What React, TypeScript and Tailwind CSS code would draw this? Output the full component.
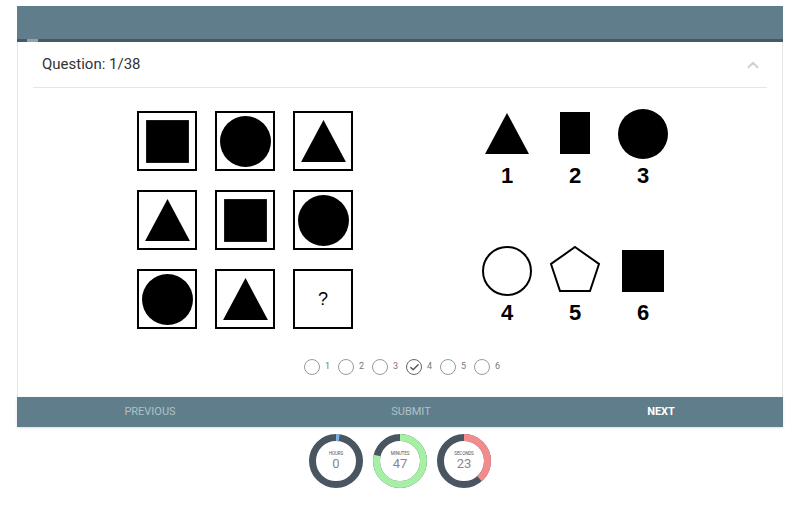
import React from 'react'
import { ChevronUp, Check } from 'lucide-react'

type Shape = 'square' | 'circle' | 'triangle' | 'rect' | 'ring' | 'pentagon' | 'none'

const ShapeIcon = ({ shape, size }: { shape: Shape; size: number }) => {
  return (
    <svg width={size} height={size} viewBox="0 0 52 52">
      {shape === 'square' && <rect x="5" y="5" width="42" height="42" fill="#000" />}
      {shape === 'rect' && <rect x="11" y="4" width="30" height="42" fill="#000" />}
      {shape === 'circle' && <circle cx="26" cy="26" r="25" fill="#000" />}
      {shape === 'ring' && <circle cx="26" cy="26" r="24" fill="none" stroke="#000" strokeWidth="2" />}
      {shape === 'triangle' && <polygon points="26,5 48,46 4,46" fill="#000" />}
      {shape === 'pentagon' && <polygon points="26,2 50,19 41,46 11,46 2,19" fill="none" stroke="#000" strokeWidth="2" />}
    </svg>
  )
}

const matrix: Shape[] = ['square', 'circle', 'triangle', 'triangle', 'square', 'circle', 'circle', 'triangle', 'none']

const answers: { shape: Shape; n: number }[][] = [
  [
    { shape: 'triangle', n: 1 },
    { shape: 'rect', n: 2 },
    { shape: 'circle', n: 3 },
  ],
  [
    { shape: 'ring', n: 4 },
    { shape: 'pentagon', n: 5 },
    { shape: 'square', n: 6 },
  ],
]

const Ring = ({ label, value, color, base, from, to }: { label: string; value: number; color: string; base: string; from: number; to: number }) => {
  const r = 23.5
  const c = 2 * Math.PI * r
  const len = ((to - from) / 360) * c
  return (
    <div className="relative w-[54px] h-[54px]">
      <svg width="54" height="54" viewBox="0 0 54 54" className="absolute inset-0">
        <circle cx="27" cy="27" r={r} fill="none" stroke={base} strokeWidth="7" />
        <circle
          cx="27"
          cy="27"
          r={r}
          fill="none"
          stroke={color}
          strokeWidth="7"
          strokeDasharray={`${len} ${c}`}
          transform={`rotate(${from - 90} 27 27)`}
        />
      </svg>
      <div className="absolute inset-0 flex flex-col items-center justify-center pt-[1px]">
        <span className="text-[4.5px] leading-none uppercase text-[#555] tracking-tight">{label}</span>
        <span className="text-[13px] leading-[14px] text-[#888]">{value}</span>
      </div>
    </div>
  )
}

export default function App() {
  return (
    <div className="w-full min-h-[513px] bg-white" style={{ fontFamily: 'Roboto, "Liberation Sans", sans-serif' }}>
      <div className="mx-[17px] pt-[6px] w-[766px]">
        {/* top bar */}
        <div className="h-[33px] bg-[#607d8b]"></div>
        <div className="h-[3px] bg-[#455a64]">
          <div className="ml-[10px] w-[11px] h-full bg-[#90a4ae]"></div>
        </div>

        {/* card */}
        <div className="border-x border-[#e6e6e6] bg-white">
          <div className="mx-[15px] h-[46px] flex items-center justify-between border-b border-[#e5e5e5] pl-[9px] pr-[5px]">
            <span className="text-[15px] text-[#333]">Question: 1/38</span>
            <ChevronUp size={18} strokeWidth={2.5} className="text-[#d0d0d0]" />
          </div>

          <div className="flex pt-[20px]">
            <div className="ml-[119px] mt-[3px] grid grid-cols-3 gap-x-[18px] gap-y-[19px] w-[216px]">
              {matrix.map((s, i) => (
                <div key={i} className="w-[60px] h-[60px] border-2 border-black flex items-center justify-center">
                  {s === 'none' ? (
                    <span className="text-[18px] text-black" style={{ fontFamily: '"Liberation Sans", Arial, sans-serif' }}>?</span>
                  ) : (
                    <ShapeIcon shape={s} size={53} />
                  )}
                </div>
              ))}
            </div>

            <div className="ml-[120px] flex flex-col gap-[56px]">
              {answers.map((row, ri) => (
                <div key={ri} className="flex">
                  {row.map((a) => (
                    <div key={a.n} className="w-[68px] flex flex-col items-center">
                      <ShapeIcon shape={a.shape} size={52} />
                      <span className="text-[22px] font-bold leading-[26px] text-black mt-[3px]" style={{ fontFamily: '"Liberation Sans", Arial, sans-serif' }}>
                        {a.n}
                      </span>
                    </div>
                  ))}
                </div>
              ))}
            </div>
          </div>

          {/* options */}
          <div className="flex justify-center gap-[8px] pt-[30px] pb-[22px] pl-[4px]">
            {[1, 2, 3, 4, 5, 6].map((n) => (
              <div key={n} className="flex items-center gap-[5px] w-[26px]">
                <div className={`w-[16px] h-[16px] shrink-0 rounded-full border flex items-center justify-center ${n === 4 ? 'border-[#666]' : 'border-[#999]'}`}>
                  {n === 4 && <Check size={11} strokeWidth={3} className="text-[#555]" />}
                </div>
                <span className="text-[9px] text-[#777]">{n}</span>
              </div>
            ))}
          </div>
        </div>

        {/* footer */}
        <div className="h-[30px] bg-[#607d8b] flex items-center text-[11px] uppercase shadow-sm">
          <div className="w-[266px] text-center text-[#b0c0c8]">Previous</div>
          <div className="w-[256px] text-center text-[#b0c0c8]">Submit</div>
          <div className="flex-1 text-center text-white font-bold">Next</div>
        </div>

        {/* timers */}
        <div className="flex justify-center gap-[10px] mt-[7px]">
          <Ring label="Hours" value={0} color="#7fb0e0" base="#4a5562" from={0} to={8} />
          <Ring label="Minutes" value={47} color="#a6f0a6" base="#4a5562" from={0} to={282} />
          <Ring label="Seconds" value={23} color="#f28b8b" base="#4a5562" from={0} to={138} />
        </div>
      </div>
    </div>
  )
}
